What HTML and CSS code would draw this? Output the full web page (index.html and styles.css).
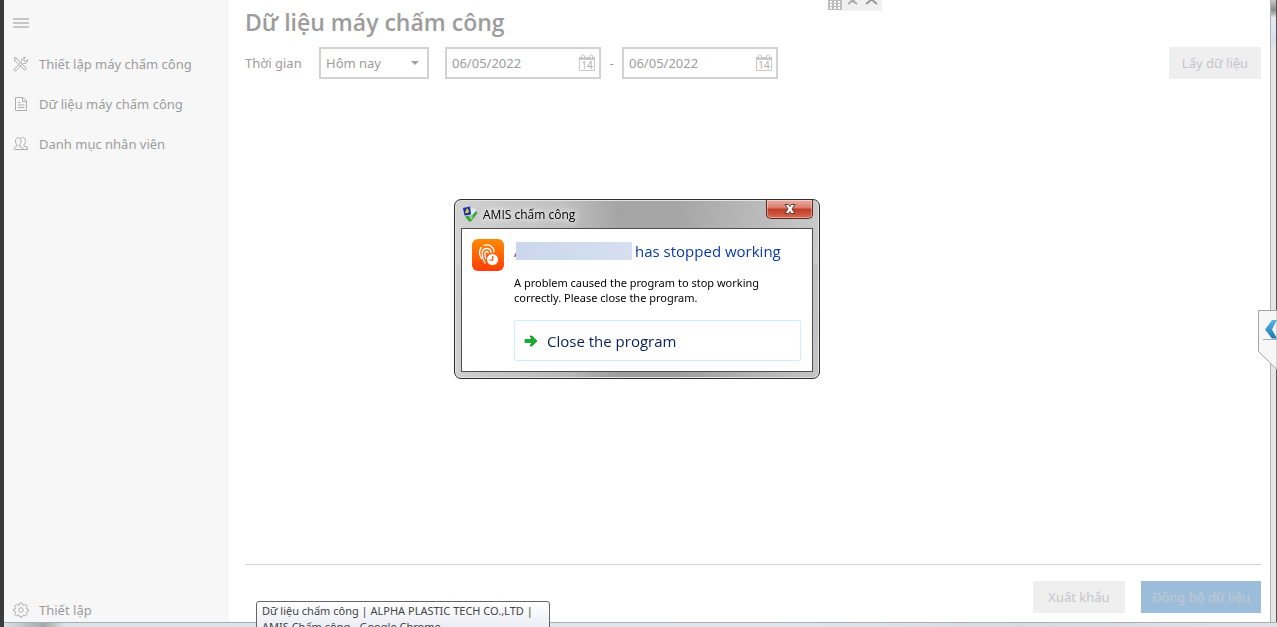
FILE: index.html
```html
<!DOCTYPE html>
<html lang="vi">
<head>
    <meta charset="UTF-8">
    <meta name="viewport" content="width=device-width, initial-scale=1.0">
    <title>AMIS chấm công</title>
    <link rel="stylesheet" href="styles.css">
</head>
<body>
    <div class="window">
        <!-- Sidebar -->
        <nav class="sidebar">
            <button class="menu-toggle" type="button" aria-label="Menu">
                <svg width="16" height="10" viewBox="0 0 16 10"><path d="M0 1h16M0 5h16M0 9h16" stroke="#c6c6c6" stroke-width="2"/></svg>
            </button>
            <a class="nav-item" href="#setup">
                <svg class="nav-icon" viewBox="0 0 16 16">
                    <path d="M1.500 1.500l2.500.8 1 1.700 8.500 8.500-1.800 1.800-8.500-8.500-1.500-1z"/>
                    <path d="M1.200 13.200l7.300-7.400c-.5-2.400 1.200-4.600 4-4.500l-1.800 1.900.4 1.700 1.700.4 1.900-1.800c.2 2.700-2 4.500-4.500 4l-7.300 7.200c-1.300.7-2.300-.3-1.700-1.500z"/>
                </svg>
                <span>Thiết lập máy chấm công</span>
            </a>
            <a class="nav-item" href="#data">
                <svg class="nav-icon" viewBox="0 0 16 16">
                    <path d="M2.500 1.500h7.500l3.500 3.500v9.500h-11zM9.500 1.500v4h4M5 6.500h2.500M5 9h6.500M5 11.500h6.500"/>
                </svg>
                <span>Dữ liệu máy chấm công</span>
            </a>
            <a class="nav-item" href="#staff">
                <svg class="nav-icon" viewBox="0 0 16 16">
                    <path d="M6.500 4.500c0-4 6-4 6 0 0 2-.5 3-1.500 4v1.500l3.500 1.500v2H9.500"/>
                    <path d="M2.500 5c0-4.300 5.500-4.300 5.500 0 0 1.700-.5 3-1.500 3.800v1.500l3 1.500c.5.5.5 1 .5 1.700H1.300c0-1.500.2-2 1-2.500L4 10V8.800C3 8 2.500 6.700 2.500 5z" fill="#f7f7f7"/>
                </svg>
                <span>Danh mục nhân viên</span>
            </a>
            <a class="nav-item nav-settings" href="#settings">
                <svg class="nav-icon" viewBox="0 0 16 16">
                    <circle cx="8" cy="8" r="2.300"/>
                    <path d="M6.700 1h2.600l.4 1.900 1.300.5 1.600-1 1.700 1.700-1 1.600.5 1.300 1.900.4v1.600l-1.900.4-.5 1.300 1 1.600-1.700 1.700-1.600-1-1.300.5L9.300 15H6.700l-.4-1.500-1.300-.5-1.600 1-1.700-1.700 1-1.600-.5-1.300L.5 9V7.400L2.200 7l.5-1.300-1-1.600 1.700-1.700 1.600 1 1.300-.5z"/>
                </svg>
                <span>Thiết lập</span>
            </a>
        </nav>

        <!-- Main content -->
        <main class="main">
            <h1 class="page-title">Dữ liệu máy chấm công</h1>

            <form class="filters">
                <label class="filter-label" for="period">Thời gian</label>
                <div class="select-box">
                    <select id="period">
                        <option>Hôm nay</option>
                    </select>
                    <svg class="select-arrow" width="8" height="4" viewBox="0 0 8 4"><path d="M0 0h8L4 4z" fill="#a0a0a0"/></svg>
                </div>
                <div class="date-box">
                    <input type="text" value="06/05/2022" aria-label="Từ ngày">
                    <button class="date-btn" type="button" aria-label="Chọn ngày">
                        <svg width="18" height="18" viewBox="0 0 18 18">
                            <path d="M1.500 3.500h15v13h-15z" fill="#fff" stroke="#c8c8c8"/>
                            <path d="M1 3h16v3H1z" fill="#c8c8c8"/>
                            <path d="M3.500 4V2c0-1.500 3-1.500 3 0v2zM11.500 4V2c0-1.500 3-1.500 3 0v2z" fill="#fff" stroke="#c8c8c8"/>
                            <text class="date-day" x="9" y="15" text-anchor="middle">14</text>
                        </svg>
                    </button>
                </div>
                <span class="dash">-</span>
                <div class="date-box">
                    <input type="text" value="06/05/2022" aria-label="Đến ngày">
                    <button class="date-btn" type="button" aria-label="Chọn ngày">
                        <svg width="18" height="18" viewBox="0 0 18 18">
                            <path d="M1.500 3.500h15v13h-15z" fill="#fff" stroke="#c8c8c8"/>
                            <path d="M1 3h16v3H1z" fill="#c8c8c8"/>
                            <path d="M3.500 4V2c0-1.500 3-1.500 3 0v2zM11.500 4V2c0-1.500 3-1.500 3 0v2z" fill="#fff" stroke="#c8c8c8"/>
                            <text class="date-day" x="9" y="15" text-anchor="middle">14</text>
                        </svg>
                    </button>
                </div>
                <button class="btn btn-load" type="button">Lấy dữ liệu</button>
            </form>

            <footer class="actions">
                <button class="btn" type="button">Xuất khẩu</button>
                <button class="btn btn-primary" type="button">Đồng bộ dữ liệu</button>
            </footer>
        </main>
        <div class="frame-right"></div>
    </div>
    <div class="frame-bottom"></div>

    <!-- Remote session toolbar, mostly above the top edge -->
    <svg class="session-bar" width="54" height="11" viewBox="0 0 54 11">
        <path d="M14 0h40v11H14z" fill="#f0f0f0"/>
        <path d="M0 0h14v10H0z" fill="#bdbdbd"/>
        <path d="M2 1h2v2H2zM6 1h2v2H6zM10 1h2v2h-2zM2 4h2v2H2zM6 4h2v2H6zM10 4h2v2h-2zM2 7h2v2H2zM6 7h2v2H6zM10 7h2v2h-2z" fill="#fff"/>
        <path d="M20 4l7-5M29 4l-7-5" stroke="#aaa" stroke-width="2" fill="none"/>
        <path d="M38 4l5.500-4.500L49 4" stroke="#999" stroke-width="2" fill="none"/>
    </svg>

    <!-- Side panel handle -->
    <button class="side-handle" type="button" aria-label="Mở bảng điều khiển">
        <svg width="19" height="60" viewBox="0 0 19 60">
            <defs>
                <linearGradient id="arrowBlue" x2="0" y2="1"><stop stop-color="#5bb5dd"/><stop offset="1" stop-color="#1878b4"/></linearGradient>
            </defs>
            <path d="M19 .5H.5v41L19 59.500z" fill="#f7f7f7" stroke="#a5a5a5"/>
            <path d="M5 29.500h14" stroke="#aaa"/>
            <path d="M19 10h-5l-7 9.500 7 9h5l-5-9z" fill="url(#arrowBlue)"/>
        </svg>
    </button>

    <!-- Taskbar tooltip -->
    <div class="tooltip">Dữ liệu chấm công | ALPHA PLASTIC TECH CO.,LTD | AMIS Chấm công - Google Chrome</div>

    <!-- Error dialog -->
    <div class="overlay">
        <section class="dialog" role="dialog" aria-labelledby="dialog-title">
            <header class="dialog-bar">
                <svg width="16" height="16" viewBox="0 0 16 16">
                    <path d="M1 2l7-1.500 1 8-6.500 1z" fill="#1733b0"/>
                    <path d="M3 7l2-5 2 3-1 2z" fill="#f4d12c"/>
                    <path d="M9 2l5 1-2 5-3 1z" fill="#dfe9f8"/>
                    <path d="M3 10.500l4-1 1 2.500 6-7 1.500 2L9 15.500H7z" fill="#37a53a"/>
                    <path d="M8 12l3-3-1 5z" fill="#92dc7e"/>
                </svg>
                <span class="dialog-name" id="dialog-title">AMIS chấm công</span>
                <button class="dialog-close" type="button" aria-label="Close">
                    <svg width="12" height="10" viewBox="0 0 12 10">
                        <path d="M1 .5h3.500L6 2.500 7.500.5H11L8 5l3 4.500H7.500L6 7.500l-1.500 2H1L4 5z" fill="#fff" stroke="#5e3a39"/>
                    </svg>
                </button>
            </header>
            <div class="dialog-body">
                <svg class="app-icon" width="32" height="32" viewBox="0 0 32 32">
                    <defs>
                        <linearGradient id="appOrange" x2="0" y2="1"><stop stop-color="#ff8a00"/><stop offset="1" stop-color="#ff3d08"/></linearGradient>
                    </defs>
                    <rect width="32" height="32" rx="6" fill="url(#appOrange)"/>
                    <g fill="none" stroke="#fff" stroke-width="1.300" stroke-linecap="round">
                        <path d="M12 6.500c5-2.200 10 1.500 10 6.500M9.500 19.500C7 15.500 7 11.500 9.300 8.500"/>
                        <path d="M13 24c-4-6-4-14.500 1.500-14.500 3 0 4.500 2 4.500 4"/>
                        <path d="M14 20c-1.500-3.500-1.500-7.500.7-7.500 1 0 1.500.5 1.500 1.500"/>
                    </g>
                    <circle cx="20.500" cy="20.500" r="6.500" fill="#ff5f06"/>
                    <circle cx="20.500" cy="20.500" r="5.500" fill="#fff"/>
                    <path d="M20.700 17v4.200h-3" fill="none" stroke="#ff5a0a" stroke-width="1.300"/>
                </svg>
                <div class="dialog-content">
                    <h2 class="dialog-heading"><span class="app-name">A</span><span class="app-mask"></span>has stopped working</h2>
                    <p class="dialog-text">A problem caused the program to stop working correctly. Please close the program.</p>
                    <button class="dialog-command" type="button">
                        <svg width="14" height="12" viewBox="0 0 14 12"><path d="M1 4.500h7L6 1h2l5 5-5 5H6l2-3.500H1z" fill="#12b32b" stroke="#078b1e" stroke-width=".7"/></svg>
                        <span>Close the program</span>
                    </button>
                </div>
            </div>
        </section>
    </div>
</body>
</html>
```
FILE: styles.css
```css
/* General Reset */
* {
    margin: 0;
    padding: 0;
    box-sizing: border-box;
}

body {
    display: flex;
    flex-direction: column;
    position: relative;
    height: 100vh;
    overflow: hidden;
    font-family: "Noto Sans", "Open Sans", sans-serif;
    font-size: 13px;
    color: #9c9c9c;
    background-color: #fff;
    border-left: 4px solid #3b3b3b;
}

button,
input,
select {
    font: inherit;
    color: inherit;
    background: none;
    border: none;
}

.window {
    display: flex;
    flex: 1;
    min-height: 0;
}

/* Sidebar */
.sidebar {
    display: flex;
    flex-direction: column;
    width: 225px;
    background-color: #f7f7f7;
}

.menu-toggle {
    display: flex;
    align-items: center;
    height: 44px;
    padding: 2px 9px 0;
}

.nav-item {
    display: flex;
    align-items: center;
    gap: 10px;
    height: 40px;
    padding: 0 9px;
    color: inherit;
    text-decoration: none;
}

.nav-icon {
    width: 16px;
    height: 16px;
    fill: none;
    stroke: #adadad;
}

.nav-settings {
    height: 24px;
    margin-top: auto;
}

/* Main content */
.main {
    display: flex;
    flex: 1;
    flex-direction: column;
    padding: 0 9px 9px 16px;
}

.page-title {
    height: 47px;
    font-family: "Open Sans", "Noto Sans", sans-serif;
    font-size: 23px;
    font-weight: 600;
    line-height: 45px;
}

.filters {
    display: flex;
    align-items: center;
}

.filter-label {
    width: 74px;
}

.select-box,
.date-box {
    display: flex;
    align-items: center;
    height: 32px;
    border: 2px solid #d2d2d2;
}

.select-box {
    position: relative;
    width: 110px;
    margin-right: 16px;
}

.select-box select {
    width: 100%;
    height: 100%;
    padding-left: 5px;
    appearance: none;
}

.select-arrow {
    position: absolute;
    right: 8px;
    pointer-events: none;
}

.date-box {
    width: 156px;
    padding: 0 3px 0 5px;
}

.date-box input {
    flex: 1;
    min-width: 0;
}

.date-btn {
    display: flex;
}

.date-day {
    font-size: 10px;
    fill: #b0b0b0;
}

.dash {
    width: 21px;
    text-align: center;
}

.btn {
    height: 32px;
    min-width: 92px;
    padding: 0 8px;
    color: #c5c5c9;
    background-color: #efefef;
}

.btn-load {
    margin-left: auto;
}

.btn-primary {
    min-width: 120px;
    color: #c3c9d3;
    background-color: #9cbdd9;
}

.actions {
    display: flex;
    justify-content: flex-end;
    gap: 16px;
    margin-top: auto;
    padding-top: 16px;
    border-top: 1px solid #d2d2d2;
}

/* Window frame */
.frame-right {
    width: 7px;
    background: linear-gradient(#c8c8c8, #8a8a8a 10px, #e4e9ef 18px, #d5e0ec 42px, #e6e6e6 48px, #e6e6e6);
    border-left: 1px solid #b0b4b8;
    border-right: 1px solid #555;
}

.frame-bottom {
    height: 5px;
    background: linear-gradient(90deg, #dce3e6, #a3a9aa 40px, #dce3e6 60px, #e2e6ea 60%, #d8dade 80%, #e2e2e8);
    border-top: 1px solid #a9b0b5;
}

.session-bar {
    position: absolute;
    top: 0;
    right: 395px;
}

.side-handle {
    position: absolute;
    top: 310px;
    right: 0;
    display: flex;
}

.tooltip {
    position: absolute;
    left: 252px;
    bottom: -8px;
    width: 294px;
    height: 34px;
    padding: 1px 5px;
    font-size: 11px;
    line-height: 16px;
    color: #444;
    background: linear-gradient(#fff, #e6e8f2);
    border: 1px solid #666;
    border-radius: 3px;
}

/* Error dialog */
.overlay {
    position: fixed;
    inset: 0;
    display: flex;
    align-items: center;
    justify-content: center;
    padding: 0 3px 49px 0;
}

.dialog {
    width: 366px;
    padding: 0 6px 6px;
    color: #000;
    background: linear-gradient(90deg, rgba(255, 255, 255, 0.5), rgba(255, 255, 255, 0.3) 30%, rgba(255, 255, 255, 0) 45%, rgba(255, 255, 255, 0) 60%, rgba(255, 255, 255, 0.4)), linear-gradient(#a4a4a4, #a8a8a8 64px, #999 66px, #9e9e9e);
    border: 1px solid #2e2e2e;
    border-radius: 7px;
    box-shadow: inset 0 0 0 1px #e2e2e2;
}

.dialog-bar {
    display: flex;
    align-items: center;
    gap: 5px;
    height: 28px;
    padding-left: 1px;
    font-family: "Open Sans", "Noto Sans", sans-serif;
    font-size: 12px;
}

.dialog-name {
    text-shadow: 0 0 6px #fff, 0 0 8px #fff;
}

.dialog-close {
    display: flex;
    align-items: center;
    align-self: flex-start;
    justify-content: center;
    width: 47px;
    height: 19px;
    margin-left: auto;
    background: linear-gradient(#eab0a5, #d9796a 45%, #bd3a26 50%, #d9684f);
    border: 1px solid #5c2822;
    border-top: none;
    border-radius: 0 0 5px 5px;
    box-shadow: inset 0 0 0 1px rgba(255, 255, 255, 0.4);
}

.dialog-body {
    display: flex;
    gap: 10px;
    padding: 10px 11px 10px 10px;
    background-color: #fff;
    border: 1px solid #4d4d4d;
}

.app-icon {
    flex: none;
}

.dialog-content {
    flex: 1;
}

.dialog-heading {
    display: flex;
    align-items: center;
    height: 24px;
    font-family: "Open Sans", "Noto Sans", sans-serif;
    font-size: 15px;
    font-weight: 400;
    color: #0c3a9f;
}

.app-name {
    width: 2px;
    color: #9c3860;
}

.app-mask {
    z-index: 1;
    width: 116px;
    height: 18px;
    margin-right: 3px;
    background: linear-gradient(90deg, #cbd7ec, #d5dff0);
}

.dialog-text {
    margin: 12px 0 15px;
    font-size: 11px;
    line-height: 15px;
}

.dialog-command {
    display: flex;
    align-items: center;
    gap: 9px;
    width: 100%;
    height: 41px;
    padding: 0 9px;
    font-family: "Open Sans", "Noto Sans", sans-serif;
    font-size: 15px;
    color: #0a1f5c;
    border: 1px solid #c9f0fb;
    border-radius: 2px;
}
```
